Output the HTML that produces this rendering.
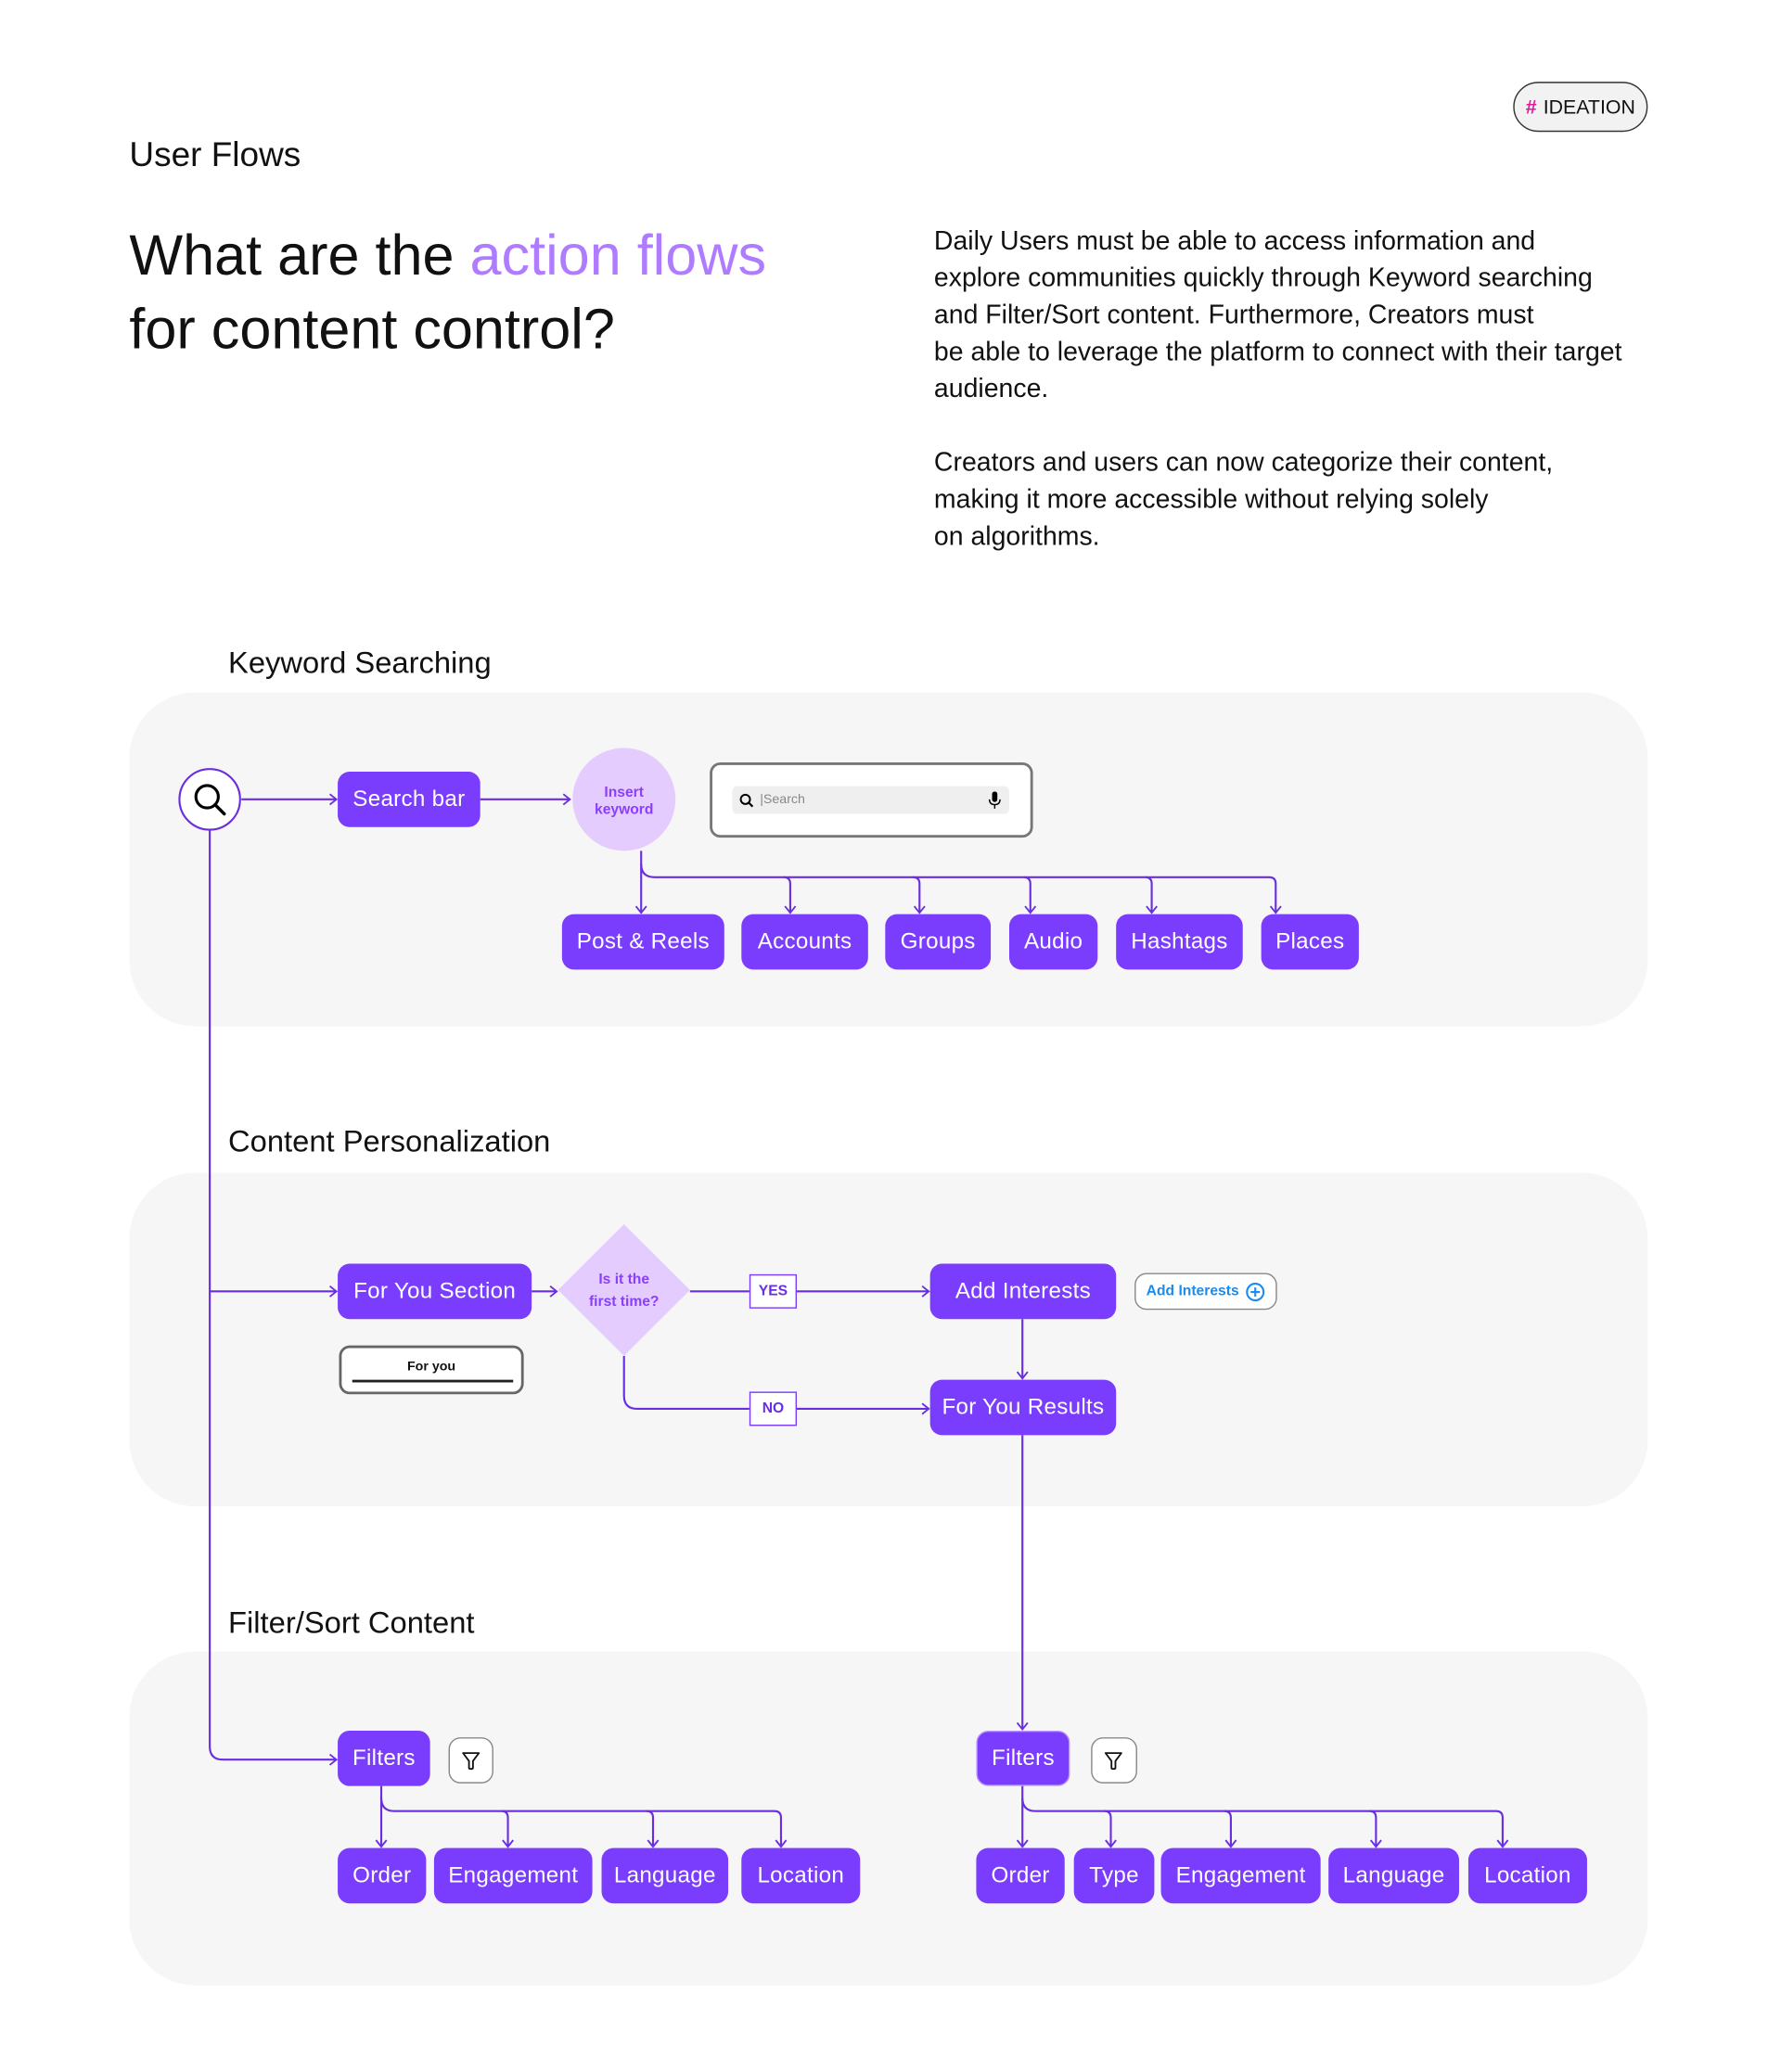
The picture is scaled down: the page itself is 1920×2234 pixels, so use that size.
<!DOCTYPE html>
<html><head><meta charset="utf-8"><style>
html,body{margin:0;padding:0;background:#fff;}
body{width:1920px;height:2234px;overflow:hidden;position:relative;font-family:"Liberation Sans",sans-serif;}
#w{position:absolute;left:0;top:0;width:1350px;height:1571px;transform:scale(1.42222);transform-origin:0 0;}
.a{position:absolute;}
.panel{position:absolute;left:98px;width:1151px;height:253px;background:#f6f6f6;border-radius:50px;}
.b{position:absolute;height:42px;background:#7a3cfd;color:#fff;border-radius:9px;font-size:17px;display:flex;align-items:center;justify-content:center;white-space:nowrap;letter-spacing:0.2px;}
.t{position:absolute;font-size:23px;color:#111;}
.p{position:absolute;left:708px;font-size:20px;line-height:28px;color:#111;}
.tag{position:absolute;width:34px;height:24px;border:1px solid #7a3cfd;background:#fff;color:#6a2ee0;font-size:11px;font-weight:bold;display:flex;align-items:center;justify-content:center;}
</style></head><body><div id="w">
<div class="a" style="left:1147px;top:62px;width:100px;height:36px;border:1.5px solid #333;border-radius:19px;background:#f2f2f2;display:flex;align-items:center;justify-content:center;font-size:15px;color:#111;"><span style="color:#e0189b;font-weight:bold;margin-right:5px;">#</span>IDEATION</div>
<div class="a" style="left:98px;top:102px;font-size:26px;color:#111;">User Flows</div>
<div class="a" style="left:98px;top:166px;font-size:43px;line-height:56px;color:#111;">What are the <span style="color:#b07cff">action flows</span><br>for content control?</div>
<div class="p" style="top:169px;">Daily Users must be able to access information and<br>explore communities quickly through Keyword searching<br>and Filter/Sort content. Furthermore, Creators must<br>be able to leverage the platform to connect with their target<br>audience.</div>
<div class="p" style="top:337px;">Creators and users can now categorize their content,<br>making it more accessible without relying solely<br>on algorithms.</div>

<div class="t" style="left:173px;top:489px;">Keyword Searching</div>
<div class="panel" style="top:525px;"></div>
<div class="t" style="left:173px;top:852px;">Content Personalization</div>
<div class="panel" style="top:889px;"></div>
<div class="t" style="left:173px;top:1217px;">Filter/Sort Content</div>
<div class="panel" style="top:1252px;"></div>

<svg class="a" style="left:0;top:0" width="1350" height="1571">
<defs><marker id="m" markerWidth="10" markerHeight="10" refX="8" refY="5" orient="auto" markerUnits="userSpaceOnUse"><path d="M3 1 L8 5 L3 9" fill="none" stroke="#6a2ee0" stroke-width="1.3"/></marker></defs>
<g fill="none" stroke="#6a2ee0" stroke-width="1.5">
<path d="M183 606 H255" marker-end="url(#m)"/>
<path d="M364 606 H432" marker-end="url(#m)"/>
<path d="M159 629 V1324 Q159 1334 169 1334 H255" marker-end="url(#m)"/>
<path d="M159 979 H255" marker-end="url(#m)"/>
<path d="M486 645 V692" marker-end="url(#m)"/>
<path d="M486 655 Q486 665 496 665 H962 Q967 665 967 670 V692" marker-end="url(#m)"/>
<path d="M594 665 Q599 665 599 670 V692" marker-end="url(#m)"/>
<path d="M692 665 Q697 665 697 670 V692" marker-end="url(#m)"/>
<path d="M776 665 Q781 665 781 670 V692" marker-end="url(#m)"/>
<path d="M868 665 Q873 665 873 670 V692" marker-end="url(#m)"/>
<path d="M403 979 H422" marker-end="url(#m)"/>
<path d="M523 979 H704" marker-end="url(#m)"/>
<path d="M473 1028 V1058 Q473 1068 483 1068 H704" marker-end="url(#m)"/>
<path d="M775 1000 V1045" marker-end="url(#m)"/>
<path d="M775 1088 V1311" marker-end="url(#m)"/>
<path d="M289 1354 V1400" marker-end="url(#m)"/>
<path d="M289 1363 Q289 1373 299 1373 H587 Q592 1373 592 1378 V1400" marker-end="url(#m)"/>
<path d="M380 1373 Q385 1373 385 1378 V1400" marker-end="url(#m)"/>
<path d="M490 1373 Q495 1373 495 1378 V1400" marker-end="url(#m)"/>
<path d="M775 1354 V1400" marker-end="url(#m)"/>
<path d="M775 1363 Q775 1373 785 1373 H1134 Q1139 1373 1139 1378 V1400" marker-end="url(#m)"/>
<path d="M837 1373 Q842 1373 842 1378 V1400" marker-end="url(#m)"/>
<path d="M928 1373 Q933 1373 933 1378 V1400" marker-end="url(#m)"/>
<path d="M1038 1373 Q1043 1373 1043 1378 V1400" marker-end="url(#m)"/>
</g>
<circle cx="159" cy="606" r="23" fill="#fff" stroke="#6a2ee0" stroke-width="1.5"/>
<circle cx="157" cy="604" r="8.5" fill="none" stroke="#000" stroke-width="2.2"/>
<path d="M163 610 L170 617" stroke="#000" stroke-width="2.4" stroke-linecap="round"/>
<circle cx="473" cy="606" r="39" fill="#e5ccff"/>
<path d="M473 928 L523 978 L473 1028 L423 978 Z" fill="#e5ccff"/>
<text x="473" y="604" font-size="11" font-weight="bold" fill="#8a3ffc" text-anchor="middle" font-family="Liberation Sans">Insert</text>
<text x="473" y="617" font-size="11" font-weight="bold" fill="#8a3ffc" text-anchor="middle" font-family="Liberation Sans">keyword</text>
<text x="473" y="973" font-size="11" font-weight="bold" fill="#8a3ffc" text-anchor="middle" font-family="Liberation Sans">Is it the</text>
<text x="473" y="990" font-size="11" font-weight="bold" fill="#8a3ffc" text-anchor="middle" font-family="Liberation Sans">first time?</text>
</svg>

<div class="b" style="left:256px;top:585px;width:108px;">Search bar</div>
<div class="a" style="left:538px;top:578px;width:241px;height:53px;border:2px solid #777;border-radius:8px;background:#fff;"></div>
<div class="a" style="left:555px;top:596px;width:210px;height:21px;background:#efefef;border-radius:4px;font-size:10px;color:#888;line-height:21px;">
<svg class="a" style="left:5px;top:5px" width="12" height="12"><circle cx="5" cy="5" r="3.5" fill="none" stroke="#000" stroke-width="1.4"/><path d="M7.5 7.5 L10.5 10.5" stroke="#000" stroke-width="1.5"/></svg>
<span class="a" style="left:21px;top:0">|Search</span>
<svg class="a" style="left:194px;top:4px" width="10" height="14"><rect x="3" y="0" width="4" height="8" rx="2" fill="#000"/><path d="M1 6 Q1 10 5 10 Q9 10 9 6 M5 10 V13" fill="none" stroke="#000" stroke-width="1"/></svg>
</div>
<div class="b" style="left:426px;top:693px;width:123px;">Post &amp; Reels</div>
<div class="b" style="left:562px;top:693px;width:96px;">Accounts</div>
<div class="b" style="left:671px;top:693px;width:80px;">Groups</div>
<div class="b" style="left:765px;top:693px;width:67px;">Audio</div>
<div class="b" style="left:846px;top:693px;width:96px;">Hashtags</div>
<div class="b" style="left:956px;top:693px;width:74px;">Places</div>

<div class="b" style="left:256px;top:958px;width:147px;">For You Section</div>
<div class="tag" style="left:568px;top:966px;">YES</div>
<div class="tag" style="left:568px;top:1055px;">NO</div>
<div class="b" style="left:705px;top:958px;width:141px;">Add Interests</div>
<div class="b" style="left:705px;top:1046px;width:141px;">For You Results</div>
<div class="a" style="left:860px;top:965px;width:106px;height:26px;border:1.5px solid #888;border-radius:9px;background:#fff;color:#1a8cf0;font-size:11px;font-weight:bold;display:flex;align-items:center;justify-content:center;">Add Interests<svg style="margin-left:5px" width="15" height="15"><circle cx="7.5" cy="7.5" r="6.3" fill="none" stroke="#1a8cf0" stroke-width="1.5"/><path d="M7.5 4 V11 M4 7.5 H11" stroke="#1a8cf0" stroke-width="1.5"/></svg></div>
<div class="a" style="left:257px;top:1020px;width:136px;height:33px;border:2px solid #666;border-radius:8px;background:#fff;">
<div class="a" style="left:0;top:9px;width:136px;text-align:center;font-size:10px;font-weight:bold;color:#111;">For you</div>
<div class="a" style="left:8px;top:24px;width:122px;height:2px;background:#222;"></div></div>

<div class="b" style="left:256px;top:1312px;width:70px;">Filters</div>
<div class="b" style="left:740px;top:1312px;width:69px;height:40px;border:1.5px solid #b893ff;">Filters</div>
<div class="a" style="left:340px;top:1317px;width:32px;height:33px;border:1.5px solid #888;border-radius:9px;background:#fff;"><svg class="a" style="left:8px;top:9px" width="16" height="16"><path d="M2 2 H14 L9.5 8 V13 Q9.5 14 8.5 14 H7.5 Q6.5 14 6.5 13 V8 Z" fill="none" stroke="#111" stroke-width="1.3" stroke-linejoin="round"/></svg></div>
<div class="a" style="left:827px;top:1317px;width:33px;height:33px;border:1.5px solid #888;border-radius:9px;background:#fff;"><svg class="a" style="left:8px;top:9px" width="16" height="16"><path d="M2 2 H14 L9.5 8 V13 Q9.5 14 8.5 14 H7.5 Q6.5 14 6.5 13 V8 Z" fill="none" stroke="#111" stroke-width="1.3" stroke-linejoin="round"/></svg></div>
<div class="b" style="left:256px;top:1401px;width:67px;">Order</div>
<div class="b" style="left:329px;top:1401px;width:120px;">Engagement</div>
<div class="b" style="left:456px;top:1401px;width:96px;">Language</div>
<div class="b" style="left:562px;top:1401px;width:90px;">Location</div>
<div class="b" style="left:740px;top:1401px;width:67px;">Order</div>
<div class="b" style="left:814px;top:1401px;width:61px;">Type</div>
<div class="b" style="left:880px;top:1401px;width:121px;">Engagement</div>
<div class="b" style="left:1007px;top:1401px;width:99px;">Language</div>
<div class="b" style="left:1113px;top:1401px;width:90px;">Location</div>
</div></body></html>
